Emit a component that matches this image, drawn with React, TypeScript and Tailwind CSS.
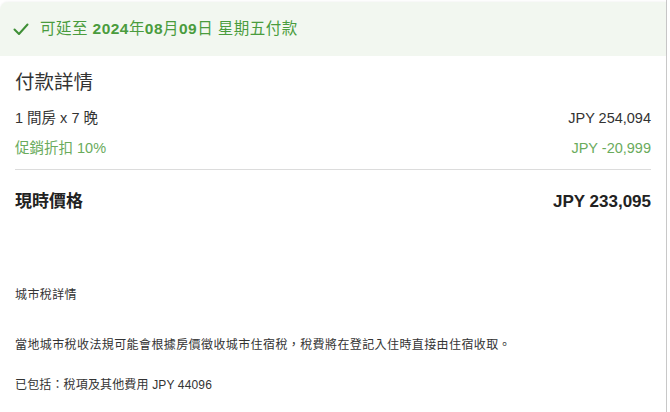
import React from "react";

export default function App() {
  const font = { fontFamily: '"Liberation Sans", Arial, "Noto Sans CJK TC", sans-serif' };
  return (
    <div className="w-[670px] h-[412px] bg-white overflow-hidden" style={font}>
      <div className="w-[667px] h-full border-r border-[#c8c8c8] pt-[2px]">
        <div className="h-[54px] bg-[#f2f7f0] rounded-tl-[8px] flex items-center pl-[13px] gap-[11px] shadow-[0_-1px_2px_rgba(0,0,0,0.04)]">
          <svg width="16" height="14" viewBox="0 0 16 14" fill="none">
            <path d="M1.5 7.5 L6 12 L14.5 2.5" stroke="#3f8f36" strokeWidth="2" strokeLinecap="round" strokeLinejoin="round" />
          </svg>
          <span className="text-[15.5px] text-[#4a9c3d] tracking-[0.45px]">
            可延至 <span className="font-bold">2024</span>年<span className="font-bold">08</span>月<span className="font-bold">09</span>日 星期五付款
          </span>
        </div>
        <div className="pl-[15px] pr-[15px]">
          <div className="text-[19.5px] text-[#333] mt-[14px] leading-[24px]">付款詳情</div>
          <div className="flex justify-between text-[14.5px] text-[#333] mt-[15px] leading-[18px]">
            <span>1 間房 x 7 晚</span>
            <span>JPY 254,094</span>
          </div>
          <div className="flex justify-between text-[14.5px] text-[#6aab5c] mt-[12px] leading-[18px]">
            <span>促銷折扣 10%</span>
            <span>JPY -20,999</span>
          </div>
          <div className="border-t border-[#dcdcdc] mt-[12px]" />
          <div className="flex justify-between text-[17px] font-bold text-[#222] mt-[21px] leading-[22px]">
            <span>現時價格</span>
            <span>JPY 233,095</span>
          </div>
          <div className="text-[12px] tracking-[0.4px] text-[#333] mt-[75px] leading-[14px]">城市稅詳情</div>
          <div className="text-[12px] tracking-[0.4px] text-[#333] mt-[36px] leading-[14px]">
            當地城市稅收法規可能會根據房價徵收城市住宿稅，稅費將在登記入住時直接由住宿收取。
          </div>
          <div className="text-[12px] tracking-[0.15px] text-[#333] mt-[26px] leading-[14px]">已包括：稅項及其他費用 JPY 44096</div>
        </div>
      </div>
    </div>
  );
}
